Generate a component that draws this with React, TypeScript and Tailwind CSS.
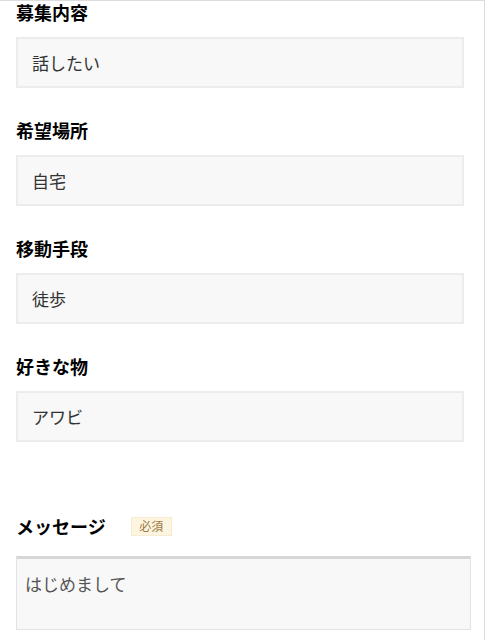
const font = { fontFamily: '"Noto Sans CJK JP", "Noto Sans", sans-serif' };

const fields = [
  { label: "募集内容", value: "話したい" },
  { label: "希望場所", value: "自宅" },
  { label: "移動手段", value: "徒歩" },
  { label: "好きな物", value: "アワビ" },
];

function Field({ label, value }: { label: string; value: string }) {
  return (
    <div className="mb-[31px]">
      <div className="h-[22px] text-[18px] font-bold leading-[22px] text-black">{label}</div>
      <div className="mt-[14px] flex h-[51px] items-center border-2 border-[#ececec] bg-[#f8f8f8] px-[14px] text-[17px] text-[#333]">
        {value}
      </div>
    </div>
  );
}

export default function App() {
  return (
    <div className="min-h-screen bg-white" style={font}>
      <div className="w-[485px] min-h-[640px] border-t border-r border-[#dcdcdc] pl-4 pr-5">
        {fields.map((f) => (
          <Field key={f.label} {...f} />
        ))}
        <div className="mt-[72px] flex h-6 items-center">
          <span className="text-[18px] font-bold leading-6 text-black">メッセージ</span>
          <span className="ml-[25px] flex h-[19px] w-[41px] items-center justify-center border border-[#f7ecd2] bg-[#fdf5df] text-[12px] text-[#9c7a48]">
            必須
          </span>
        </div>
        <div className="-mr-[7px] mt-[18px] h-[74px] border border-t-[3px] border-[#e3e3e3] border-t-[#d6d6d6] bg-[#f8f8f8] px-2 pt-[13px] text-[17px] leading-6 text-[#555]">
          はじめまして
        </div>
      </div>
    </div>
  );
}
